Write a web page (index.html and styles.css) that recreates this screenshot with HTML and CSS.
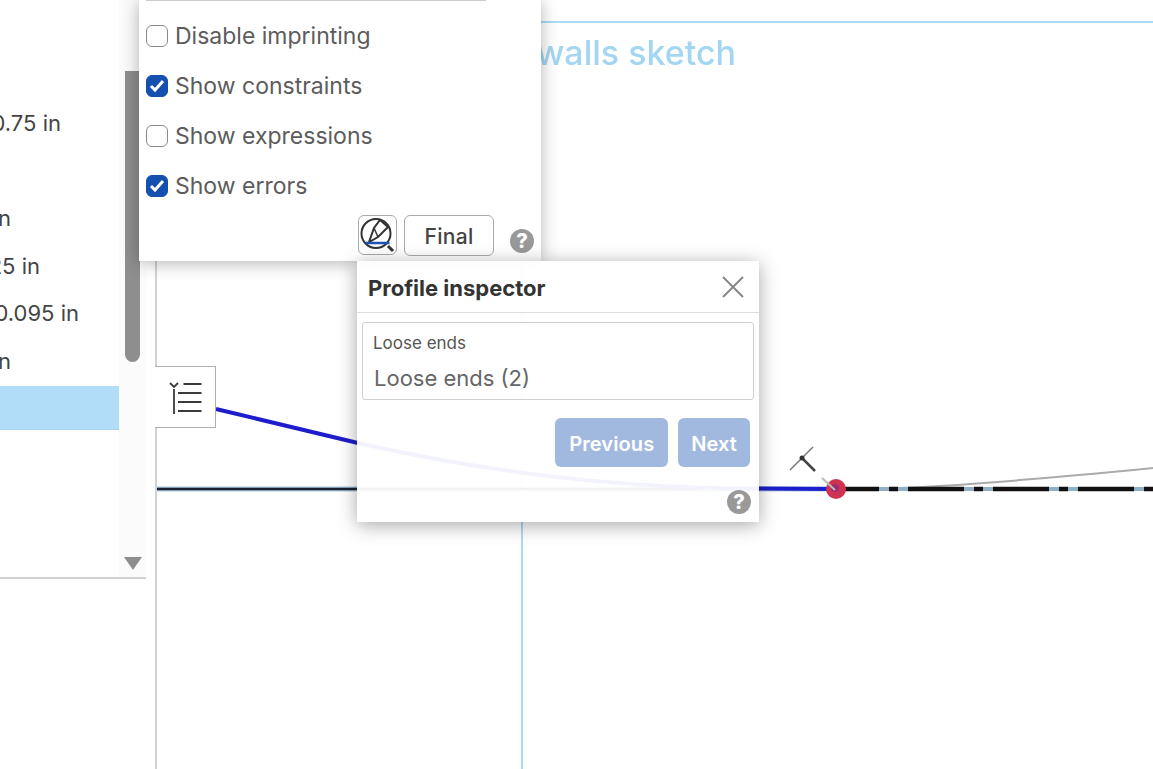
FILE: index.html
```html
<!DOCTYPE html>
<html lang="en">
<head>
 <meta charset="UTF-8">
 <title>Profile inspector</title>
 <link rel="stylesheet" href="styles.css">
</head>
<body>
 <div class="app">
  <!-- sketch geometry, drawn in page coordinates -->
  <svg class="sketch" width="1153" height="769" viewBox="0 0 1153 769">
   <line x1="156" y1="0" x2="156" y2="769" stroke="#d2d2d2" stroke-width="2"/>
   <line x1="522" y1="22" x2="1153" y2="22" stroke="#a9dcf6" stroke-width="2"/>
   <line x1="522" y1="21" x2="522" y2="769" stroke="#a9dcf6" stroke-width="2"/>
   <text class="sketch-title" x="736" y="65" text-anchor="end">walls sketch</text>
   <line x1="157" y1="489" x2="836" y2="489" stroke="#a9c8dc" stroke-width="5"/>
   <line x1="157" y1="489" x2="760" y2="489" stroke="#1c2230" stroke-width="2.5"/>
   <path d="M216 409 L358 443 Q560 489 760 488.5 L836 489" fill="none" stroke="#1d1dcb" stroke-width="4"/>
   <path d="M880 488.5 Q960 487 1153 468" fill="none" stroke="#aaaaaa" stroke-width="2"/>
   <line x1="836" y1="489" x2="1153" y2="489" stroke="#8fb0c6" stroke-width="4"/>
   <line x1="836" y1="489" x2="1153" y2="489" stroke="#111111" stroke-width="4.5" stroke-dasharray="56 10 9 10" stroke-dashoffset="13"/>
   <circle cx="836" cy="489" r="10" fill="#cf3350"/>
   <circle cx="835" cy="488" r="4" fill="#8a2a80" fill-opacity="0.7"/>
   <line x1="790" y1="470" x2="813" y2="447" stroke="#777777" stroke-width="1.5"/>
   <line x1="802" y1="458" x2="815" y2="471" stroke="#444444" stroke-width="2.5"/>
   <circle cx="802" cy="458" r="2.5" fill="#333333"/>
   <line x1="822" y1="478" x2="835" y2="490" stroke="#bbbbbb" stroke-width="2"/>
  </svg>

  <aside class="side-panel">
   <div class="list">
    <div class="row row-a">0.75 in</div>
    <div class="row"></div>
    <div class="row row-b">n</div>
    <div class="row row-c">25 in</div>
    <div class="row row-d">0.095 in</div>
    <div class="row row-b">n</div>
    <div class="row row-selected"></div>
   </div>
   <div class="scroll-track">
    <div class="scroll-thumb"></div>
    <div class="scroll-arrow"></div>
   </div>
  </aside>

  <button class="list-toggle">
   <svg width="36" height="34" viewBox="0 0 36 34" fill="none" stroke="#3a3a3a" stroke-width="1.8">
    <path d="M2 3l4 4 4-4"/>
    <path d="M6 9v25"/>
    <path d="M15.5 4h18M10 13h23.5M10 22h23.5M10 31h23.5"/>
   </svg>
  </button>

  <section class="settings">
   <div class="settings-rule"></div>
   <label class="check-row"><span class="check"></span>Disable imprinting</label>
   <label class="check-row"><span class="check check-on">
    <svg width="16" height="14" viewBox="0 0 16 14"><path d="M2 7l4 4 8-9" fill="none" stroke="#fff" stroke-width="3"/></svg>
   </span>Show constraints</label>
   <label class="check-row"><span class="check"></span>Show expressions</label>
   <label class="check-row"><span class="check check-on">
    <svg width="16" height="14" viewBox="0 0 16 14"><path d="M2 7l4 4 8-9" fill="none" stroke="#fff" stroke-width="3"/></svg>
   </span>Show errors</label>
   <div class="settings-foot">
    <button class="icon-button">
     <svg width="36" height="36" viewBox="0 0 36 36" fill="none" stroke="#333333" stroke-width="2">
      <circle cx="16" cy="16.5" r="14.5"/>
      <path d="M28 29l5 5" stroke-width="3"/>
      <path d="M9 25l5-14 6-8 8 7-10 10z"/>
      <path d="M14 11l4 9" stroke-width="1.5"/>
      <path d="M5.5 26h24" stroke="#1c55b5" stroke-width="2.5"/>
     </svg>
    </button>
    <button class="final-button">Final</button>
    <span class="help">?</span>
   </div>
  </section>

  <section class="inspector">
   <header class="inspector-head">
    <h2>Profile inspector</h2>
    <svg width="22" height="22" viewBox="0 0 22 22" stroke="#888888" stroke-width="2"><path d="M1 1l20 20M21 1L1 21"/></svg>
   </header>
   <div class="field">
    <div class="field-label">Loose ends</div>
    <div class="field-value">Loose ends (2)</div>
   </div>
   <div class="inspector-actions">
    <button class="step-button">Previous</button>
    <button class="step-button step-next">Next</button>
   </div>
   <div class="inspector-foot"><span class="help">?</span></div>
  </section>
 </div>
</body>
</html>
```
FILE: styles.css
```css
html,
body {
 margin: 0;
 padding: 0;
 height: 100%;
 overflow: hidden;
 background-color: #ffffff;
}

.app {
 position: relative;
 width: 1153px;
 height: 769px;
 overflow: hidden;
 font-family: "Inter", sans-serif;
 color: #555555;
}

.sketch {
 position: absolute;
 top: 0;
 left: 0;
 filter: blur(0.4px);
}

.sketch-title {
 font-family: "Inter", sans-serif;
 font-size: 34px;
 font-weight: 500;
 fill: #a3d6f3;
}

/* Left list, cut off by the window edge */
.side-panel {
 position: relative;
 display: flex;
 width: 146px;
 height: 577px;
 border-bottom: 2px solid #d0d0d0;
 background-color: #ffffff;
}

.list {
 width: 119px;
 padding-top: 99.4px;
 overflow: hidden;
}

.row {
 display: flex;
 justify-content: flex-end;
 align-items: center;
 height: 47.5px;
 font-size: 22px;
 color: #444444;
 white-space: nowrap;
}

.row-a { padding-right: 58px; }
.row-b { padding-right: 108px; }
.row-c { padding-right: 79px; }
.row-d { padding-right: 40px; }

.row-selected {
 height: 43px;
 margin-top: 1.6px;
 background-color: #b1ddf8;
 border-bottom: 1px solid #a5d5f2;
}

.scroll-track {
 position: relative;
 width: 27px;
 background-color: #fbfbfb;
}

.scroll-thumb {
 position: absolute;
 top: 71px;
 left: 6px;
 width: 15px;
 height: 291px;
 border-radius: 0 0 8px 8px;
 background-color: #8e8e8e;
}

.scroll-arrow {
 position: absolute;
 top: 557px;
 left: 5px;
 width: 0;
 height: 0;
 border-left: 9px solid transparent;
 border-right: 9px solid transparent;
 border-top: 13px solid #8e8e8e;
}

.list-toggle {
 position: absolute;
 top: 366px;
 left: 155px;
 display: flex;
 align-items: center;
 justify-content: center;
 width: 61px;
 height: 62px;
 padding: 0 0 0 2px;
 border: 1px solid #b0b0b0;
 border-left: 0;
 background-color: #ffffff;
}

/* Sketch settings flyout */
.settings {
 position: absolute;
 top: 0;
 left: 139px;
 width: 402px;
 height: 261px;
 box-sizing: border-box;
 padding: 0 7px;
 background-color: #ffffff;
 box-shadow: 0 2px 16px rgba(0, 0, 0, 0.3);
}

.settings-rule {
 width: 340px;
 height: 1px;
 margin-bottom: 10px;
 background-color: #cccccc;
}

.check-row {
 display: flex;
 align-items: center;
 gap: 7px;
 height: 50px;
 font-size: 23px;
 color: #5c5c5c;
}

.check {
 display: flex;
 align-items: center;
 justify-content: center;
 width: 22px;
 height: 22px;
 box-sizing: border-box;
 border: 1px solid #8a8a8a;
 border-radius: 6px;
 background-color: #ffffff;
}

.check-on {
 border-color: #1550b0;
 background-color: #1550b0;
}

.settings-foot {
 display: flex;
 align-items: flex-start;
 margin: 4px 0 0 212px;
}

.icon-button {
 display: flex;
 align-items: center;
 justify-content: center;
 width: 39px;
 height: 40px;
 padding: 0;
 border: 1px solid #aaaaaa;
 border-radius: 6px;
 background-color: #ffffff;
}

.final-button {
 width: 90px;
 height: 41px;
 margin-left: 7px;
 padding: 2px 0 0;
 border: 1px solid #aaaaaa;
 border-radius: 6px;
 background-color: #ffffff;
 font-family: "Inter", sans-serif;
 font-size: 21px;
 font-weight: 500;
 letter-spacing: 0.3px;
 color: #444444;
}

.help {
 display: flex;
 align-items: center;
 justify-content: center;
 width: 24px;
 height: 24px;
 border-radius: 50%;
 background-color: #999999;
 color: #ffffff;
 font-size: 20px;
 font-weight: 800;
}

.settings-foot .help {
 margin: 14px 0 0 16px;
}

/* Profile inspector dialog */
.inspector {
 position: absolute;
 top: 261px;
 left: 357px;
 width: 402px;
 height: 261px;
 box-sizing: border-box;
 background-color: rgba(255, 255, 255, 0.95);
 box-shadow: 0 3px 18px rgba(0, 0, 0, 0.35);
}

.inspector-head {
 display: flex;
 align-items: center;
 justify-content: space-between;
 box-sizing: border-box;
 height: 52px;
 padding: 2px 15px 0 11px;
 border-bottom: 1px solid #dddddd;
}

.inspector-head h2 {
 margin: 0;
 font-size: 22px;
 font-weight: 700;
 color: #333333;
}

.inspector-head svg {
 margin-top: -2px;
}

.field {
 height: 78px;
 margin: 9px 5px 0;
 box-sizing: border-box;
 padding: 10px 10px;
 border: 1px solid #d0d0d0;
 border-radius: 3px;
}

.field-label {
 font-size: 17px;
 color: #555555;
}

.field-value {
 margin-top: 12px;
 padding-left: 1px;
 font-size: 22px;
 color: #666666;
}

.inspector-actions {
 display: flex;
 justify-content: flex-end;
 gap: 10px;
 margin: 18px 9px 0 0;
}

.step-button {
 height: 49px;
 padding: 2px 14px 0;
 border: 0;
 border-radius: 6px;
 background-color: #a2b9df;
 font-family: "Inter", sans-serif;
 font-size: 20px;
 font-weight: 600;
 letter-spacing: 0.1px;
 color: #ffffff;
}

.step-next {
 padding: 2px 13px 0;
}

.inspector-foot {
 display: flex;
 justify-content: flex-end;
 margin: 23px 8px 0 0;
}
```
